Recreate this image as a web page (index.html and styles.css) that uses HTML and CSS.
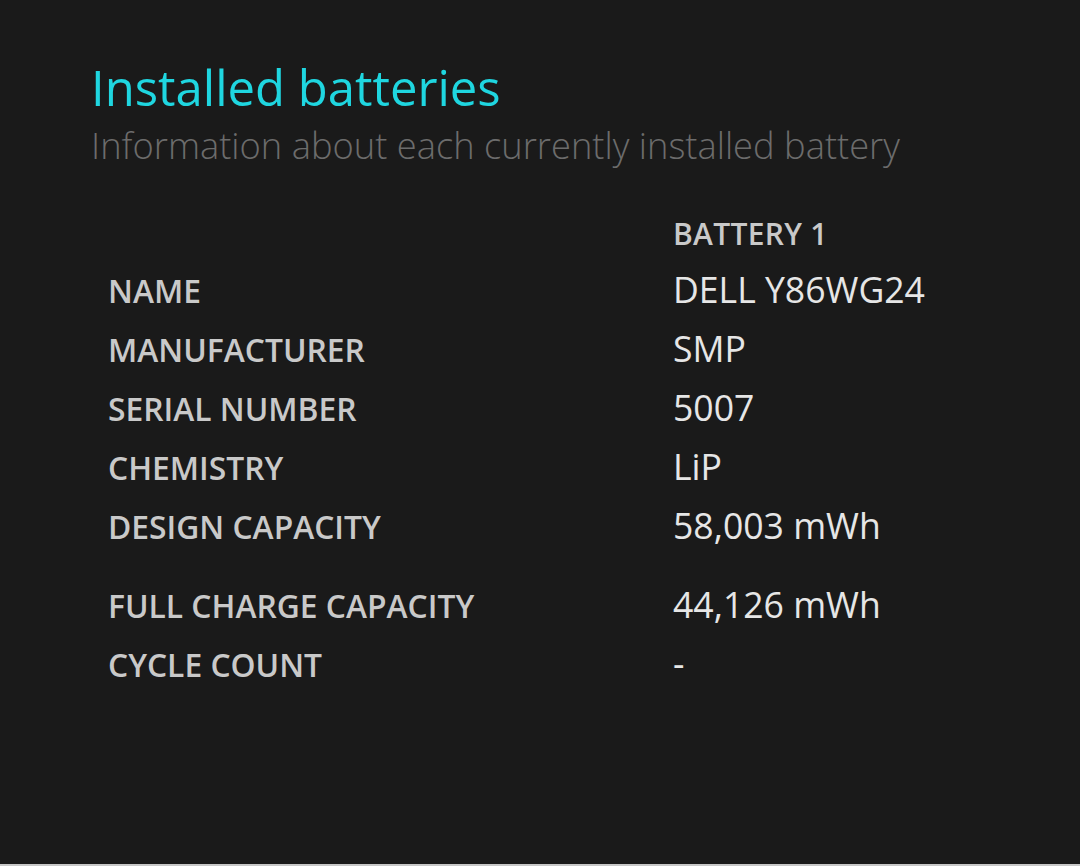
FILE: index.html
```html
<!DOCTYPE html>
<html lang="en">
<head>
<meta charset="utf-8">
<title>Installed batteries</title>
<link rel="stylesheet" href="styles.css">
</head>
<body>
<main class="page">
  <header class="heading">
    <h1 class="title">Installed batteries</h1>
    <p class="subtitle">Information about each currently installed battery</p>
  </header>
  <div class="table">
    <div class="row head"><span class="label"></span><span class="colhead">BATTERY 1</span></div>
    <div class="row"><span class="label">NAME</span><span class="value">DELL Y86WG24</span></div>
    <div class="row"><span class="label">MANUFACTURER</span><span class="value">SMP</span></div>
    <div class="row"><span class="label">SERIAL NUMBER</span><span class="value">5007</span></div>
    <div class="row"><span class="label">CHEMISTRY</span><span class="value">LiP</span></div>
    <div class="row"><span class="label">DESIGN CAPACITY</span><span class="value">58,003 mWh</span></div>
    <div class="row gap"><span class="label">FULL CHARGE CAPACITY</span><span class="value">44,126 mWh</span></div>
    <div class="row"><span class="label">CYCLE COUNT</span><span class="value">-</span></div>
  </div>
</main>
</body>
</html>
```
FILE: styles.css
```css
html, body {
  margin: 0;
  height: 100%;
  background: #1a1a1a;
}
body {
  font-family: "Open Sans", "Noto Sans", sans-serif;
  border-bottom: 2px solid #c8c8c8;
  box-sizing: border-box;
}
.page {
  padding: 55px 0 0 91px;
}
.title {
  margin: 0;
  font-size: 49px;
  font-weight: 400;
  line-height: 64px;
  color: #1fd6e0;
}
.subtitle {
  margin: 1px 0 0;
  font-size: 36.3px;
  font-weight: 300;
  line-height: 50px;
  color: #6c6c6c;
}
.table {
  margin-top: 43px;
  padding-left: 17px;
  display: flex;
  flex-direction: column;
}
.row {
  display: grid;
  grid-template-columns: 565px auto;
  align-items: baseline;
  height: 59px;
}
.row.head {
  height: 52px;
}
.row.gap {
  margin-top: 20px;
}
.label {
  font-size: 31.8px;
  font-weight: 600;
  color: #c9c9c9;
}
.colhead {
  font-size: 30px;
  font-weight: 600;
  letter-spacing: 0.3px;
  color: #c9c9c9;
}
.value {
  font-size: 35.6px;
  font-weight: 400;
  color: #e6e6e6;
}
```
